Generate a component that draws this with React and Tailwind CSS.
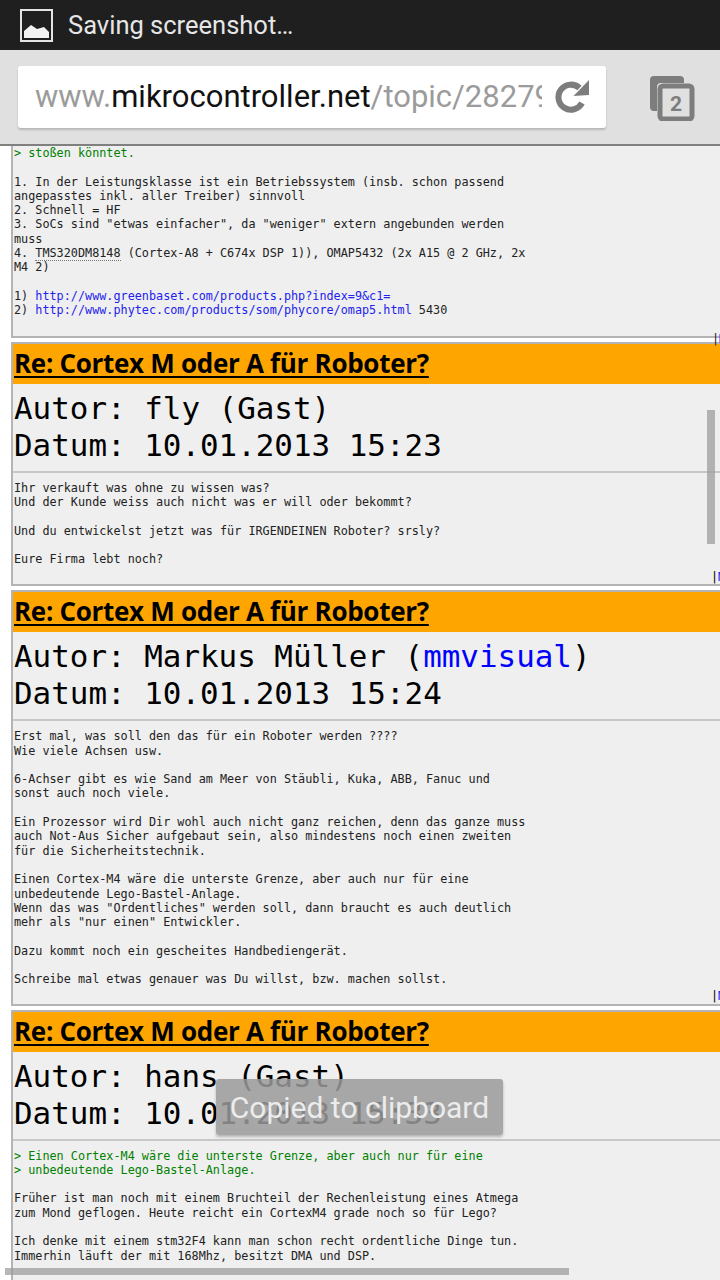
const mono = "font-['DejaVu_Sans_Mono','Liberation_Mono',monospace]";

function Quote({ children }) {
  return <span className="text-[#008000]">{children}</span>;
}

function Link({ children }) {
  return <span className="text-[#2222ee]">{children}</span>;
}

function PostFooter() {
  return (
    <div className={`${mono} pl-[698px] text-[11.8px] leading-[14.3px] text-black`}>
      |<span className="text-[#2222ee]">M</span>
    </div>
  );
}

function Post({ author, date, bodyHeight, children }) {
  return (
    <div className="mb-[4px] w-[760px] ml-[11px] border-2 border-[#b4b4b4] border-t-[#b4b4b4] bg-[#efefef]">
      <div className="h-[40px] bg-[#ffa500] pl-[1px] font-['Open_Sans',sans-serif] text-[26px] leading-[39px] font-bold tracking-[-0.3px] text-black underline decoration-2 underline-offset-[3px]">
        Re: Cortex M oder A für Roboter?
      </div>
      <div className={`${mono} h-[89px] border-b-2 border-[#c8c8c8] pt-[6px] pl-[1px] text-[30.9px] leading-[37px] text-black`}>
        <div>Autor: {author}</div>
        <div>Datum: {date}</div>
      </div>
      <div className={`${mono} px-[1px] pt-[8px] text-[11.8px] leading-[14.3px] whitespace-pre text-[#222]`} style={{ height: bodyHeight }}>
        {children}
      </div>
      <PostFooter />
    </div>
  );
}

function TopBars() {
  return (
    <>
      <div className="flex h-[50px] items-center bg-[#1f1f1f]">
        <svg className="ml-[20px] h-[33px] w-[33px]" viewBox="0 0 33 33">
          <rect x="1" y="1" width="31" height="31" fill="none" stroke="#e4e4e4" strokeWidth="2" />
          <path d="M4 29V22L11 16L17 20L24 18L29 23V29Z" fill="#f2f2f2" />
        </svg>
        <span className="ml-[15px] font-['Roboto',sans-serif] text-[25.5px] text-[#e6e6e6]">Saving screenshot…</span>
      </div>
      <div className="flex h-[96px] items-start border-b-2 border-[#808080] bg-[#e0e0e0] pt-[16px]">
        <div className="ml-[18px] flex h-[62px] w-[588px] items-center rounded-[3px] bg-white pl-[17px] shadow-[0_2px_2px_rgba(0,0,0,0.18)]">
          <div className="w-[507px] overflow-hidden font-['Roboto',sans-serif] text-[31px] whitespace-nowrap text-[#9b9b9b]">
            www.<span className="text-[#111]">mikrocontroller.net</span>/topic/282794
          </div>
          <svg className="ml-[13px] h-[36px] w-[36px]" viewBox="0 0 36 36">
            <path d="M27 24A12.5 12.5 0 1 1 24.500 9" fill="none" stroke="#7d7d7d" strokeWidth="6" />
            <path d="M18.500 17L34 16V1Z" fill="#7d7d7d" />
          </svg>
        </div>
        <svg className="mt-[9px] ml-[43px] h-[46px] w-[46px]" viewBox="0 0 46 46">
          <path d="M8 36H5A4 4 0 0 1 1 32V5A4 4 0 0 1 5 1H31A4 4 0 0 1 35 5V8H12A4 4 0 0 0 8 12Z" fill="#7d7d7d" />
          <rect x="11" y="11" width="32" height="33" rx="3" fill="none" stroke="#7d7d7d" strokeWidth="5" />
          <text x="27" y="36" textAnchor="middle" fontFamily="Roboto, sans-serif" fontWeight="700" fontSize="21" fill="#7d7d7d">2</text>
        </svg>
      </div>
    </>
  );
}

export default function App() {
  return (
    <div className="relative h-[1280px] w-[720px] overflow-hidden bg-white">
      <TopBars />

      <div className={`${mono} mb-[4px] ml-[11px] h-[192px] w-[760px] border-x-2 border-b-2 border-[#b4b4b4] bg-[#efefef] px-[1px] text-[11.8px] leading-[14.3px] whitespace-pre text-[#222]`}>
        <Quote>{"> stoßen könntet.\n"}</Quote>
        {"\n1. In der Leistungsklasse ist ein Betriebssystem (insb. schon passend\nangepasstes inkl. aller Treiber) sinnvoll\n2. Schnell = HF\n3. SoCs sind \"etwas einfacher\", da \"weniger\" extern angebunden werden\nmuss\n4. "}
        <span className="border-b border-dotted border-[#777]">TMS320DM8148</span>
        {" (Cortex-A8 + C674x DSP 1)), OMAP5432 (2x A15 @ 2 GHz, 2x\nM4 2)\n\n1) "}
        <Link>http://www.greenbaset.com/products.php?index=9&amp;c1=</Link>
        {"\n2) "}
        <Link>http://www.phytec.com/products/som/phycore/omap5.html</Link>
        {" 5430\n\n"}
        <span className="ml-[698px]">|<span className="text-[#2222ee]">M</span></span>
      </div>

      <Post author="fly (Gast)" date="10.01.2013 15:23" bodyHeight="97px">
        {"Ihr verkauft was ohne zu wissen was?\nUnd der Kunde weiss auch nicht was er will oder bekommt?\n\nUnd du entwickelst jetzt was für IRGENDEINEN Roboter? srsly?\n\nEure Firma lebt noch?"}
      </Post>

      <Post
        author={<>Markus Müller (<span className="text-[#0000ff]">mmvisual</span>)</>}
        date="10.01.2013 15:24"
        bodyHeight="268px"
      >
        {"Erst mal, was soll den das für ein Roboter werden ????\nWie viele Achsen usw.\n\n6-Achser gibt es wie Sand am Meer von Stäubli, Kuka, ABB, Fanuc und\nsonst auch noch viele.\n\nEin Prozessor wird Dir wohl auch nicht ganz reichen, denn das ganze muss\nauch Not-Aus Sicher aufgebaut sein, also mindestens noch einen zweiten\nfür die Sicherheitstechnik.\n\nEinen Cortex-M4 wäre die unterste Grenze, aber auch nur für eine\nunbedeutende Lego-Bastel-Anlage.\nWenn das was \"Ordentliches\" werden soll, dann braucht es auch deutlich\nmehr als \"nur einen\" Entwickler.\n\nDazu kommt noch ein gescheites Handbediengerät.\n\nSchreibe mal etwas genauer was Du willst, bzw. machen sollst."}
      </Post>

      <Post author="hans (Gast)" date="10.01.2013 15:33" bodyHeight="140px">
        <Quote>{"> Einen Cortex-M4 wäre die unterste Grenze, aber auch nur für eine\n> unbedeutende Lego-Bastel-Anlage.\n"}</Quote>
        {"\nFrüher ist man noch mit einem Bruchteil der Rechenleistung eines Atmega\nzum Mond geflogen. Heute reicht ein CortexM4 grade noch so für Lego?\n\nIch denke mit einem stm32F4 kann man schon recht ordentliche Dinge tun.\nImmerhin läuft der mit 168Mhz, besitzt DMA und DSP."}
      </Post>

      <div className="absolute top-[410px] left-[707px] h-[134px] w-[8px] bg-[#999]/70" />
      <div className="absolute top-[1268px] left-[5px] h-[7px] w-[564px] bg-[#999]/70" />
      <div className="absolute top-[1079px] left-[216px] flex h-[56px] w-[287px] items-center justify-center rounded-[3px] bg-[#9a9a9a]/85 font-['Roboto',sans-serif] text-[30px] text-[#ececec] shadow-[0_2px_3px_rgba(0,0,0,0.25)]">
        Copied to clipboard
      </div>
    </div>
  );
}
